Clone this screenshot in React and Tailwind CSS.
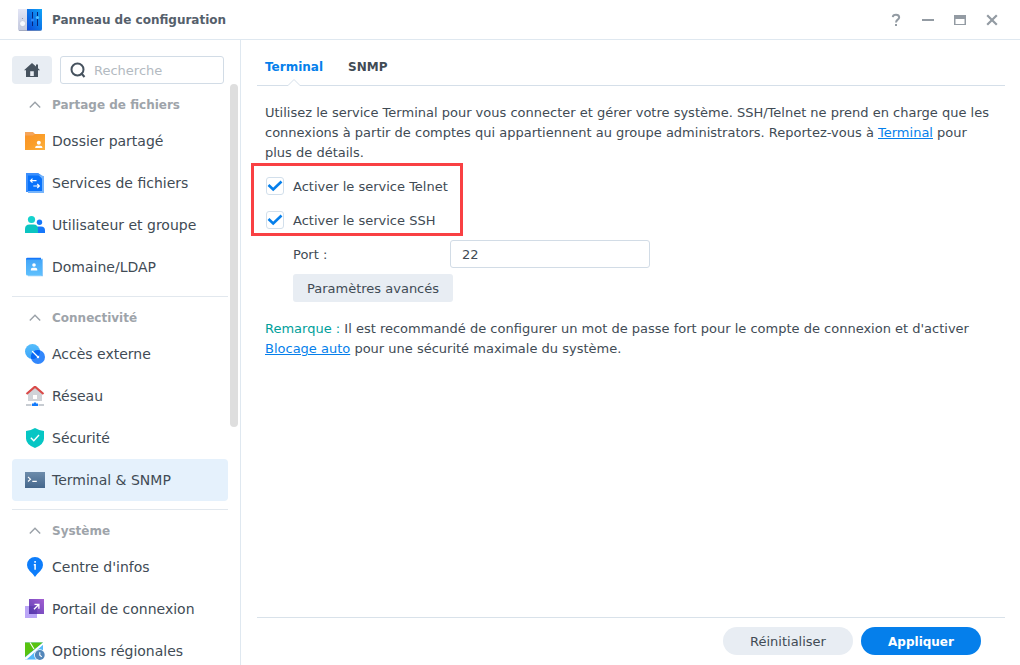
import React from "react";

function AppLogo() {
  return (
    <svg className="size-6 shrink-0" viewBox="0 0 24 24" aria-hidden="true">
      <defs>
        <linearGradient id="logoBlue" x1="0" y1="1" x2="1" y2="0">
          <stop offset="0" stopColor="#0a45d8" />
          <stop offset="1" stopColor="#10a5f8" />
        </linearGradient>
        <linearGradient id="logoGrey" x1="0" y1="0" x2="0" y2="1">
          <stop offset="0" stopColor="#e4e6f6" />
          <stop offset="1" stopColor="#c3c8de" />
        </linearGradient>
      </defs>
      <path d="M0 1h9v22H2q-2 0-2-2z" fill="url(#logoGrey)" />
      <path d="M9 1h15v20q0 2-2 2H9z" fill="url(#logoBlue)" />
      <path d="M1 22.500h22" stroke="#8f97ad" strokeOpacity=".6" />
      <circle cx="4.6" cy="15.6" r="3" fill="#f8f9ff" stroke="#b4b9d0" strokeWidth=".6" />
      <circle cx="4.5" cy="10.5" r=".6" fill="#8c93b0" />
      <path d="M14.500 4v14M19.500 4v14" stroke="#07257c" />
      <circle cx="14.5" cy="12" r="1.600" fill="#2f86f5" />
      <circle cx="19.5" cy="9.5" r="1.600" fill="#4fc0ff" />
    </svg>
  );
}

const icons = {
  folder: (
    <>
      <path d="M0 1h8l2 2h10v5H0z" fill="#f5a55a" />
      <path d="M0 4.500h8L10 3h10v16H0z" fill="url(#gFolder)" />
      <circle cx="13.800" cy="11.800" r="2" fill="#fff" />
      <path d="M10.200 17v-.6q0-1.700 1.800-1.700h3.600q1.800 0 1.800 1.700v.6z" fill="#fff" />
    </>
  ),
  fileServices: (
    <>
      <path d="M1 0h12l5 3h1v17H3v-1H1z" fill="#76b4fb" />
      <path d="M3 2h10.500L17 5.500V18H3z" fill="#0872fb" />
      <path d="M1 0h12l3 2.500H3V19H1z" fill="#3c8ffc" />
      <path d="M11.500 7.700H5.500M7.500 5.700l-2 2 2 2M8.300 13h6M12.300 11l2 2-2 2" fill="none" stroke="#fff" strokeWidth="1.200" />
    </>
  ),
  users: (
    <>
      <circle cx="14.500" cy="7.300" r="2.700" fill="#1677fa" />
      <path d="M10 18v-3q0-3.500 3.500-3.500H16q4 0 4 4V18z" fill="#1677fa" />
      <circle cx="6.500" cy="4.500" r="3.600" fill="#15d2cd" />
      <path d="M0 18v-4q0-4.500 4.500-4.500h4q4.500 0 4.500 4.500v4z" fill="#0bc4c1" />
    </>
  ),
  domain: (
    <>
      <path d="M1 2q0-1.300 1.500-1.300H16V4H1z" fill="#1677fa" />
      <path d="M16 1.700h2v17.600H3v-1h13z" fill="#8dc9fb" />
      <path d="M1 2.500h16V18.500H2.500Q1 18.500 1 17z" fill="url(#gDomain)" />
      <circle cx="9" cy="8" r="1.800" fill="#fff" />
      <path d="M5.800 13.500v-.7q0-2 1.900-2h2.700q1.900 0 1.900 2v.7z" fill="#fff" />
    </>
  ),
  external: (
    <>
      <circle cx="7.500" cy="7.500" r="7.500" fill="url(#gSky)" />
      <circle cx="13" cy="13" r="7" fill="#3287fc" />
      <path d="M6.210 14.890A7 7 0 0 1 14.890 6.210 7.500 7.500 0 0 1 6.210 14.890z" fill="#0868f4" />
      <path d="M7.500 7.500L13 13" stroke="#fff" strokeWidth="1.300" strokeLinecap="round" />
      <circle cx="13" cy="13" r="1.200" fill="#fff" />
    </>
  ),
  network: (
    <>
      <path d="M3 7l7-6 7 6v8H3z" fill="#d0d3d8" />
      <path d="M1.500 8L10 .7 18.500 8" fill="none" stroke="#d94a48" strokeWidth="2.200" />
      <path d="M8 9h4v4H8z" fill="#fff" />
      <path d="M1 18h5.500v2H1zM13.500 18H19v2h-5.500z" fill="#c7ccd2" />
      <path d="M8.900 16.500h2.200V17.500H13v2.500H7v-2.500h1.900z" fill="#127afb" />
    </>
  ),
  security: (
    <>
      <path d="M10 0q4 2.500 9 3v7.500q0 6-9 9.500-9-3.500-9-9.500V3q5-.5 9-3z" fill="#06c6c4" />
      <path d="M5.800 9.700l3 3 5.200-5.600" fill="none" stroke="#fff" strokeWidth="1.400" />
    </>
  ),
  terminal: (
    <>
      <path d="M0 2h20v16H0z" fill="url(#gTerm)" />
      <path d="M3 7l2.500 2.200L3 11.500M7.300 11.400h4.500" fill="none" stroke="#fff" strokeWidth="1.100" />
    </>
  ),
  info: (
    <>
      <path d="M10 0a8 8 0 0 1 8 8q0 3.500-2.700 5.900Q12 16.700 10 20q-2-3.300-5.300-6.100Q2 11.500 2 8a8 8 0 0 1 8-8z" fill="#0d7dfb" />
      <path d="M10.100 4v1.800M8.800 7.800h1.300v5" fill="none" stroke="#fff" strokeWidth="1.500" />
    </>
  ),
  portal: (
    <>
      <path d="M0 7h12v12H0z" fill="#bba6f7" />
      <path d="M4 0h15v15H4z" fill="url(#gPortal)" />
      <path d="M4 7h8v8H4z" fill="#5030a4" fillOpacity=".4" />
      <path d="M9 10.200L13.500 5.700M9.500 5.300h4.400v4.400" fill="none" stroke="#fff" strokeWidth="1.300" />
    </>
  ),
  regional: (
    <>
      <path d="M0 1.500h18v17H0z" fill="#54b9fa" />
      <path d="M0 1.500h18L0 16z" fill="#58c310" />
      <path d="M0 16.500L18 1.500v2.300L1.500 18.500H0z" fill="#fff" />
      <path d="M5 1.500L9 8" stroke="#fff" strokeWidth="1.100" />
      <circle cx="14.800" cy="14" r="5.700" fill="#fff" />
      <circle cx="14.800" cy="14" r="4.900" fill="#5487ba" />
      <path d="M14.800 11.200v3l2 1.700" fill="none" stroke="#fff" strokeWidth="1.100" />
    </>
  ),
};

function IconGradients() {
  return (
    <svg className="absolute size-0" aria-hidden="true">
      <defs>
        <linearGradient id="gFolder" x1="0" y1="0" x2="1" y2="1">
          <stop offset="0" stopColor="#f99327" />
          <stop offset=".5" stopColor="#fb9e29" />
          <stop offset="1" stopColor="#fdb23f" />
        </linearGradient>
        <linearGradient id="gDomain" x1="0" y1="0" x2="0" y2="1">
          <stop offset="0" stopColor="#44a6f8" />
          <stop offset="1" stopColor="#5ec0fd" />
        </linearGradient>
        <linearGradient id="gSky" x1="0" y1="0" x2="0" y2="1">
          <stop offset="0" stopColor="#55bdfb" />
          <stop offset="1" stopColor="#3ca5fa" />
        </linearGradient>
        <linearGradient id="gTerm" x1="0" y1="0" x2="0" y2="1">
          <stop offset="0" stopColor="#6d8cab" />
          <stop offset="1" stopColor="#45678c" />
        </linearGradient>
        <linearGradient id="gPortal" x1="0" y1="1" x2="1" y2="0">
          <stop offset="0" stopColor="#5b3fb4" />
          <stop offset="1" stopColor="#a55fd2" />
        </linearGradient>
      </defs>
    </svg>
  );
}

const sections = [
  {
    title: "Partage de fichiers",
    items: [
      ["folder", "Dossier partagé"],
      ["fileServices", "Services de fichiers"],
      ["users", "Utilisateur et groupe"],
      ["domain", "Domaine/LDAP"],
    ],
  },
  {
    title: "Connectivité",
    items: [
      ["external", "Accès externe"],
      ["network", "Réseau"],
      ["security", "Sécurité"],
      ["terminal", "Terminal & SNMP"],
    ],
  },
  {
    title: "Système",
    items: [
      ["info", "Centre d'infos"],
      ["portal", "Portail de connexion"],
      ["regional", "Options régionales"],
    ],
  },
];

function Section({ title, items, first }) {
  return (
    <section className={first ? "pt-1" : "mt-2 border-t border-[#e2e8ee] pt-1"}>
      <button type="button" aria-expanded="true" className="flex h-8 w-full items-center gap-[7px] pt-0.5 pl-[13px] text-xs leading-5 font-bold text-[#9ea4aa]">
        <svg className="size-5" viewBox="0 0 20 20" aria-hidden="true">
          <path d="M4.800 12.500L10 7.300l5.200 5.200" fill="none" stroke="#9aa1a8" strokeWidth="1.400" />
        </svg>
        {title}
      </button>
      <ul>
        {items.map(([icon, label]) => (
          <li key={label}>
            <a
              href="#"
              aria-current={icon === "terminal" ? "page" : undefined}
              className={
                icon === "terminal"
                  ? "flex h-[42px] items-center gap-[7px] rounded bg-[#e5f1fc] pl-[13px] text-sm whitespace-nowrap"
                  : "flex h-[42px] items-center gap-[7px] rounded pl-[13px] text-sm whitespace-nowrap"
              }
            >
              <svg className="size-5 shrink-0" viewBox="0 0 20 20" aria-hidden="true">
                {icons[icon]}
              </svg>
              {label}
            </a>
          </li>
        ))}
      </ul>
    </section>
  );
}

function Sidebar() {
  return (
    <aside className="flex w-[241px] shrink-0 flex-col border-r border-[#dfe8f0] pt-4 pl-3">
      <div className="flex gap-2 pr-4">
        <button type="button" aria-label="Accueil" className="flex h-7 w-10 items-center justify-center rounded-sm bg-[#e8edf3]">
          <svg className="size-4" viewBox="0 0 16 16" fill="#46525e" aria-hidden="true">
            <path fillRule="evenodd" d="M8 1L0 8.200h2V15h12V8.200h2L14 6.300V2.500h-2v2zM6.200 14V9.200h3.600V14z" />
          </svg>
        </button>
        <div className="flex h-7 min-w-0 flex-1 items-center gap-2 rounded-[3px] border border-[#d2dce6] pl-[9px]">
          <svg className="size-4 shrink-0" viewBox="0 0 16 16" fill="none" stroke="#46525e" strokeWidth="2" aria-hidden="true">
            <circle cx="7.500" cy="7.500" r="6" />
            <path d="M11 11l3.500 4" />
          </svg>
          <input type="search" aria-label="Recherche" placeholder="Recherche" className="h-full w-full min-w-0 bg-transparent pt-px outline-none placeholder:text-[#b3bac1]" />
        </div>
      </div>
      <div className="flex min-h-0 flex-1 justify-between">
        <nav className="w-[216px] overflow-hidden">
          {sections.map((s, i) => (
            <Section key={s.title} {...s} first={i === 0} />
          ))}
        </nav>
        <div className="mr-0.5 h-[59%] w-2 rounded-full bg-[#dedede]" />
      </div>
    </aside>
  );
}

function Check({ id, label }) {
  return (
    <div className="flex h-7 items-center gap-[9px]">
      <span className="ml-px grid size-[18px]">
        <input id={id} type="checkbox" defaultChecked className="peer col-start-1 row-start-1 size-[18px] appearance-none rounded-[3px] border border-[#d2dfeb] bg-white" />
        <svg className="pointer-events-none invisible col-start-1 row-start-1 size-[18px] peer-checked:visible" viewBox="0 0 18 18" aria-hidden="true">
          <path d="M2.500 8l4.700 4.500 8.300-8" fill="none" stroke="#057feb" strokeWidth="2.600" />
        </svg>
      </span>
      <label htmlFor={id} className="pt-0.5">{label}</label>
    </div>
  );
}

export default function App() {
  return (
    <div className="flex h-screen flex-col overflow-hidden bg-white font-['DejaVu_Sans',Verdana,sans-serif] text-[13px] leading-5 text-[#414b55]">
      <IconGradients />
      <header className="flex h-10 shrink-0 items-center justify-between border-b border-[#dfe8f0] pr-5 pl-[18px]">
        <div className="flex items-center gap-2.5">
          <AppLogo />
          <h1 className="text-xs leading-5 font-bold text-[#55606b]">Panneau de configuration</h1>
        </div>
        <div className="flex gap-4 text-[#939ba3]">
          <button type="button" aria-label="Aide" className="size-4">
            <svg viewBox="0 0 16 16" fill="none" stroke="currentColor" strokeWidth="2" aria-hidden="true">
              <path d="M4.800 5.200Q5 2.800 8 2.800t3.200 2.500q0 1.400-1.500 2.400T8 10.500M8 12v2" />
            </svg>
          </button>
          <button type="button" aria-label="Réduire" className="size-4">
            <svg viewBox="0 0 16 16" fill="currentColor" aria-hidden="true">
              <path d="M2 7h12v2H2z" />
            </svg>
          </button>
          <button type="button" aria-label="Agrandir" className="size-4">
            <svg viewBox="0 0 16 16" fill="currentColor" aria-hidden="true">
              <path fillRule="evenodd" d="M2 3h12v10H2zM3.500 7v5h9V7z" />
            </svg>
          </button>
          <button type="button" aria-label="Fermer" className="size-4">
            <svg viewBox="0 0 16 16" fill="none" stroke="currentColor" strokeWidth="2.200" aria-hidden="true">
              <path d="M3.200 3.200l9.600 9.600M12.800 3.200l-9.600 9.600" />
            </svg>
          </button>
        </div>
      </header>
      <div className="flex min-h-0 flex-1">
        <Sidebar />
        <main className="flex min-w-0 flex-1 flex-col pr-[15px] pl-4">
          <div role="tablist" className="flex h-[46px] shrink-0 items-start gap-[25px] border-b border-[#d5dfe9] px-2 pt-[17px] text-xs leading-5 font-bold">
            <button type="button" role="tab" aria-selected="true" className="relative text-[#057feb]">
              Terminal
              <svg className="absolute top-[22px] left-1/2 h-2 w-3 -translate-x-1/2" viewBox="0 0 12 8" aria-hidden="true">
                <path d="M0 6.500L6 .5l6 6V8H0z" fill="#fff" />
                <path d="M0 6.500L6 .5l6 6" fill="none" stroke="#d5dfe9" />
              </svg>
            </button>
            <button type="button" role="tab" aria-selected="false">
              SNMP
            </button>
          </div>
          <div className="flex-1 pt-[17px] pr-2 pl-2">
            <p>
              Utilisez le service Terminal pour vous connecter et gérer votre système. SSH/Telnet ne prend en charge que les
              connexions à partir de comptes qui appartiennent au groupe administrators. Reportez-vous à{" "}
              <a href="#" className="text-[#057feb] underline">Terminal</a> pour plus de détails.
            </p>
            <form className="mt-[9px] flex flex-col items-start gap-1.5">
              <div className="relative flex flex-col gap-1.5">
                <Check id="telnet" label="Activer le service Telnet" />
                <Check id="ssh" label="Activer le service SSH" />
                <div className="pointer-events-none absolute -top-[9px] -right-[15px] -bottom-0.5 -left-[14px] border-3 border-[#f94043]" />
              </div>
              <div className="flex items-center pl-7">
                <label htmlFor="port" className="w-[157px] pt-0.5">Port :</label>
                <input id="port" type="text" defaultValue="22" className="h-7 w-[200px] rounded-[3px] border border-[#d2dce6] px-[11px]" />
              </div>
              <button type="button" className="ml-7 h-7 rounded-[3px] bg-[#e8edf3] px-3.5 pt-0.5">
                Paramètres avancés
              </button>
            </form>
            <p className="mt-[17px]">
              <span className="text-[#00a09b]">Remarque :</span> Il est recommandé de configurer un mot de passe fort pour le compte de connexion et d'activer{" "}
              <a href="#" className="text-[#057feb] underline">Blocage auto</a> pour une sécurité maximale du système.
            </p>
          </div>
          <footer className="flex shrink-0 justify-end gap-2 border-t border-[#d9e2ea] pt-[9px] pr-6 pb-2.5">
            <button type="button" className="h-7 w-[130px] rounded-full bg-[#e8edf3] pt-0.5">Réinitialiser</button>
            <button type="button" className="h-7 w-[120px] rounded-full bg-[#057feb] pt-px text-xs font-bold text-white">Appliquer</button>
          </footer>
        </main>
      </div>
    </div>
  );
}
